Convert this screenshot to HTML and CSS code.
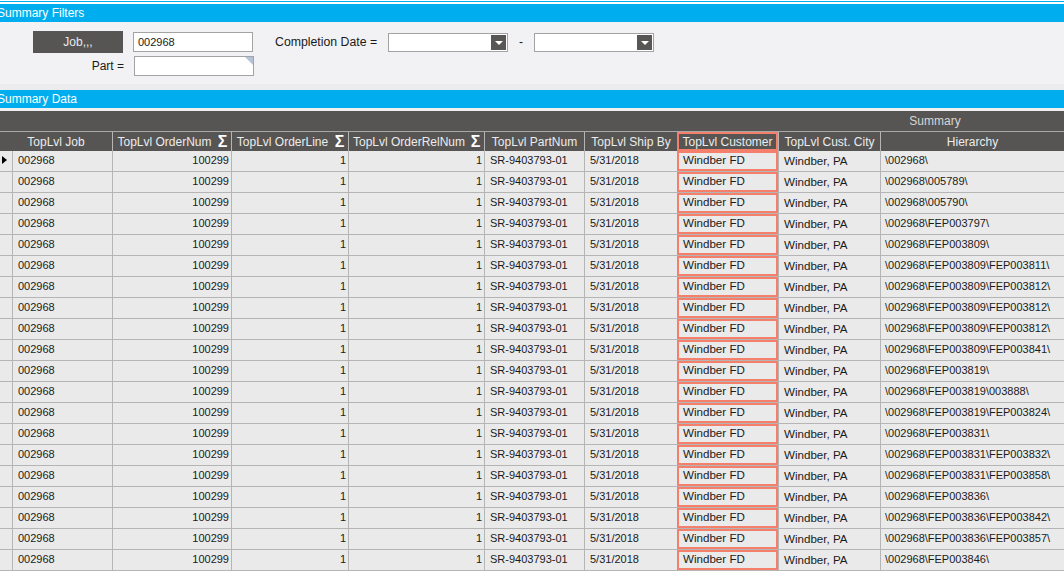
FILE: index.html
```html
<!DOCTYPE html>
<html>
<head>
  <meta charset="utf-8">
  <title>Summary</title>
  <link rel="stylesheet" href="styles.css">
</head>
<body>
  <div class="topline"></div>
  <div class="band">Summary Filters</div>
  <div class="filters">
    <div class="frow">
      <button class="btn">Job,,,</button>
      <div class="field">002968</div>
      <span class="lbl date-lbl">Completion Date =</span>
      <div class="combo"><span class="drop"></span></div>
      <span class="dash">-</span>
      <div class="combo"><span class="drop"></span></div>
    </div>
    <div class="frow">
      <span class="lbl part-lbl">Part =</span>
      <div class="field corner"></div>
    </div>
  </div>
  <div class="filters-foot"></div>
  <div class="band">Summary Data</div>
  <div class="gap"></div>

  <div class="grid" id="grid">
    <div class="group">
      <div class="group-fill"></div>
      <div class="group-title">Summary</div>
    </div>
    <div class="row head">
      <div class="hc first">TopLvl Job</div>
      <div class="hc sum"><span>TopLvl OrderNum</span><b>Σ</b></div>
      <div class="hc sum"><span>TopLvl OrderLine</span><b>Σ</b></div>
      <div class="hc sum"><span>TopLvl OrderRelNum</span><b>Σ</b></div>
      <div class="hc">TopLvl PartNum</div>
      <div class="hc">TopLvl Ship By</div>
      <div class="hc sel">TopLvl Customer</div>
      <div class="hc">TopLvl Cust. City</div>
      <div class="hc">Hierarchy</div>
    </div>
  </div>

  <script type="text/javascript">
  var grid=document.getElementById('grid'),
      paths=['\\002968\\','\\002968\\005789\\','\\002968\\005790\\','\\002968\\FEP003797\\',
        '\\002968\\FEP003809\\','\\002968\\FEP003809\\FEP003811\\','\\002968\\FEP003809\\FEP003812\\',
        '\\002968\\FEP003809\\FEP003812\\','\\002968\\FEP003809\\FEP003812\\','\\002968\\FEP003809\\FEP003841\\',
        '\\002968\\FEP003819\\','\\002968\\FEP003819\\003888\\','\\002968\\FEP003819\\FEP003824\\',
        '\\002968\\FEP003831\\','\\002968\\FEP003831\\FEP003832\\','\\002968\\FEP003831\\FEP003858\\',
        '\\002968\\FEP003836\\','\\002968\\FEP003836\\FEP003842\\','\\002968\\FEP003836\\FEP003857\\',
        '\\002968\\FEP003846\\'];

  for(var i=0;i<paths.length;i++){
    var row=document.createElement('div');
    row.className='row';
    row.innerHTML='<div class="c ind">'+(i==0?'<i class="arrow"></i>':'')+'</div>'+
      '<div class="c">002968</div>'+
      '<div class="c num">100299</div>'+
      '<div class="c num">1</div>'+
      '<div class="c num">1</div>'+
      '<div class="c">SR-9403793-01</div>'+
      '<div class="c">5/31/2018</div>'+
      '<div class="c sel">Windber FD</div>'+
      '<div class="c txt">Windber, PA</div>'+
      '<div class="c path"></div>';
    row.lastChild.textContent=paths[i];
    grid.appendChild(row);
  }
  </script>
</body>
</html>
```

FILE: styles.css
```css
html,body{
  margin:0;
  padding:0;
  background:#fff;
  font-family:"Liberation Sans",Arial,sans-serif;
  font-size:12px;
  color:#1a1a1a;
  overflow:hidden;
}

.topline{
  height:1px;
  margin:1px 0 2px;
  background:#00aeef;
}
.band{
  height:18px;
  line-height:18px;
  background:#00aeef;
  color:#fff;
  text-indent:-3px;
  white-space:nowrap;
}

/* filter panel */
.filters{
  height:53px;
  padding:9px 0 0 33px;
  background:#f2f2f4;
}
.filters-foot{
  height:6px;
  background:#ececee;
}
.frow{
  display:flex;
  align-items:center;
  height:22px;
  margin-bottom:2px;
}
.btn{
  width:90px;
  height:22px;
  border:0;
  padding:0;
  background:#575553;
  color:#e8e8e8;
  font:12px "Liberation Sans",Arial,sans-serif;
}
.field{
  position:relative;
  box-sizing:border-box;
  width:120px;
  height:20px;
  margin-left:10px;
  padding-left:4px;
  line-height:18px;
  font-size:11px;
  border:1px solid #a3a3a3;
  background:#fff;
}
.corner:after{
  content:'';
  position:absolute;
  top:0;
  right:0;
  border-top:8px solid #b3c2d8;
  border-left:8px solid transparent;
}
.lbl{
  white-space:nowrap;
}
.date-lbl{
  width:103px;
  margin-left:22px;
  font-size:12.3px;
}
.part-lbl{
  width:91px;
  text-align:right;
}
.combo{
  position:relative;
  box-sizing:border-box;
  width:120px;
  height:19px;
  margin-left:10px;
  border:1px solid #a3a3a3;
  background:#fff;
}
.drop{
  position:absolute;
  top:1px;
  right:1px;
  width:15px;
  height:15px;
  background:#595755;
}
.drop:after{
  content:'';
  position:absolute;
  left:4px;
  top:6px;
  border-top:4px solid #fff;
  border-left:4px solid transparent;
  border-right:4px solid transparent;
}
.dash{
  width:15px;
  margin-left:11px;
}
.dash + .combo{
  margin-left:0;
}

.gap{
  height:3px;
  background:#f0f0f0;
}

/* data grid */
.grid{
  width:1064px;
}
.group{
  display:flex;
  height:20px;
  line-height:20px;
  background:#575553;
  color:#d6d6d6;
  border-bottom:1px solid #a8a8a8;
}
.group-fill{
  flex:1;
}
.group-title{
  width:258px;
  text-align:center;
}
.row{
  display:grid;
  grid-template-columns:12px 100px 119px 117px 136px 100px 93px 101px 102px 184px;
  height:21px;
}
.head{
  grid-template-columns:112px 119px 117px 136px 100px 93px 101px 102px 184px;
  height:19px;
  background:#575553;
}
.hc{
  box-sizing:border-box;
  display:flex;
  align-items:center;
  justify-content:center;
  border-left:1px solid #b5b5b5;
  color:#ececec;
  white-space:nowrap;
  overflow:hidden;
}
.hc.first{
  border-left:0;
}
.hc.sum span{
  flex:1;
  text-align:center;
}
.hc.sum b{
  width:13px;
  margin-right:2px;
  font-size:16px;
  line-height:16px;
  color:#fff;
  text-align:center;
}
.hc.sel{
  border:2px solid #f4806c;
}

.c{
  box-sizing:border-box;
  padding:0 5px;
  line-height:19px;
  font-size:11px;
  background:#eaeaea;
  border-left:1px solid #b5b5b5;
  border-bottom:1px solid #b5b5b5;
  white-space:nowrap;
  overflow:hidden;
}
.c.ind{
  position:relative;
  border-left:0;
  padding:0;
}
.c.num{
  text-align:right;
  padding-right:2px;
}
.c.txt{
  font-size:11.6px;
}
.c.sel{
  border:2px solid #f4806c;
  line-height:14px;
  padding-left:4px;
  margin-bottom:1px;
  font-size:11.6px;
  box-shadow:0 1px 0 #b5b5b5;
}
.c.path{
  padding-left:4px;
}
.arrow{
  position:absolute;
  left:2px;
  top:5px;
  border-left:5px solid #000;
  border-top:4px solid transparent;
  border-bottom:4px solid transparent;
}
```
